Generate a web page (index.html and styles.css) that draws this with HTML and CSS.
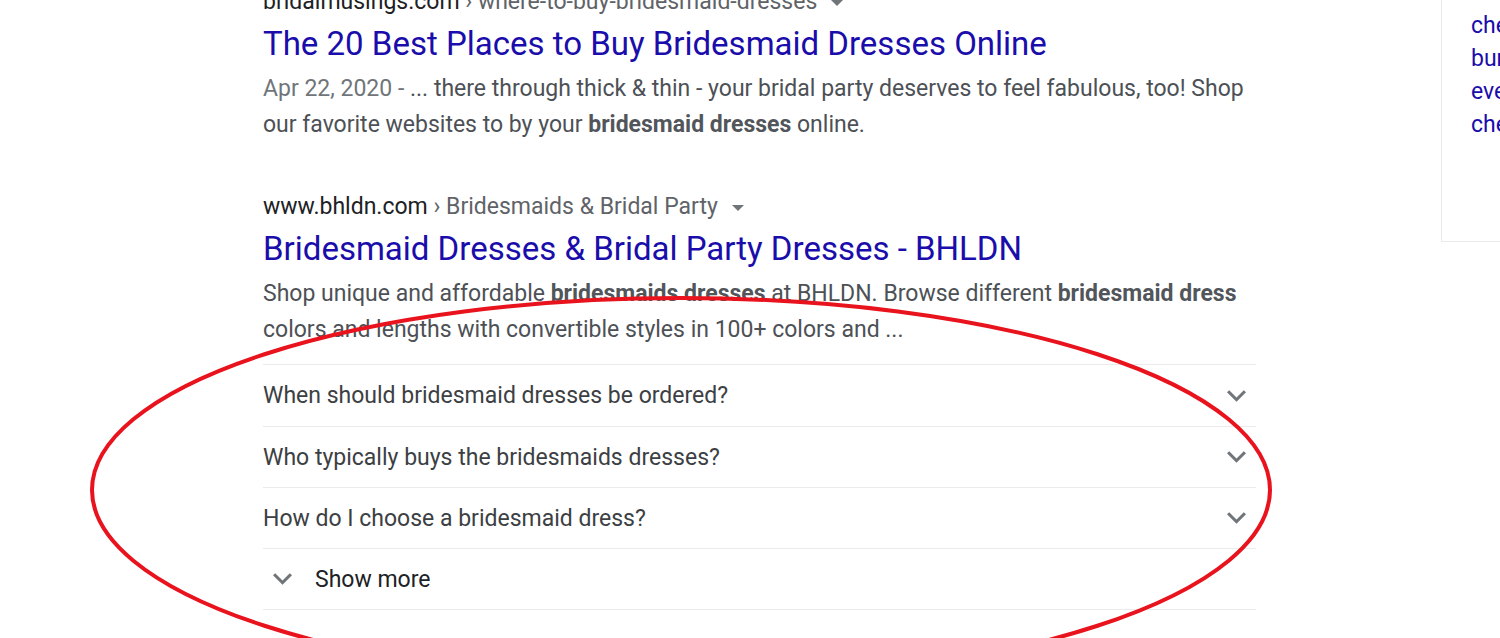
FILE: index.html
```html
<!DOCTYPE html>
<html>
<head>
<meta charset="utf-8">
<link rel="stylesheet" href="styles.css">
</head>
<body>
<div class="page">
  <main class="results">
    <div class="result first">
      <div class="cite"><span class="host">bridalmusings.com</span><span class="path"> › where-to-buy-bridesmaid-dresses</span><span class="caret"></span></div>
      <a class="title">The 20 Best Places to Buy Bridesmaid Dresses Online</a>
      <div class="snippet"><span class="date">Apr 22, 2020 - </span>... there through thick &amp; thin - your bridal party deserves to feel fabulous, too! Shop our favorite websites to by your <b>bridesmaid dresses</b> online.</div>
    </div>
    <div class="result second">
      <div class="cite"><span class="host">www.bhldn.com</span><span class="path"> › Bridesmaids &amp; Bridal Party</span><span class="caret"></span></div>
      <a class="title">Bridesmaid Dresses &amp; Bridal Party Dresses - BHLDN</a>
      <div class="snippet">Shop unique and affordable <b>bridesmaids dresses</b> at BHLDN. Browse different <b>bridesmaid dress</b> colors and lengths with convertible styles in 100+ colors and ...</div>
      <div class="faq">
        <div class="faq-row"><span>When should bridesmaid dresses be ordered?</span><svg class="chev" viewBox="6 8.59 12 7.41"><path d="M16.59 8.59L12 13.17 7.41 8.59 6 10l6 6 6-6z"/></svg></div>
        <div class="faq-row"><span>Who typically buys the bridesmaids dresses?</span><svg class="chev" viewBox="6 8.59 12 7.41"><path d="M16.59 8.59L12 13.17 7.41 8.59 6 10l6 6 6-6z"/></svg></div>
        <div class="faq-row"><span>How do I choose a bridesmaid dress?</span><svg class="chev" viewBox="6 8.59 12 7.41"><path d="M16.59 8.59L12 13.17 7.41 8.59 6 10l6 6 6-6z"/></svg></div>
        <div class="faq-row more"><svg class="chev" viewBox="6 8.59 12 7.41"><path d="M16.59 8.59L12 13.17 7.41 8.59 6 10l6 6 6-6z"/></svg><span>Show more</span></div>
      </div>
    </div>
  </main>
  <aside class="side">
    <a>cheap bridesmaid dresses</a>
    <a>burgundy bridesmaid dresses</a>
    <a>everything bridesmaid</a>
    <a>cheap bridesmaid dresses under $50</a>
  </aside>
</div>
<svg class="annotation" width="1500" height="638" viewBox="0 0 1500 638">
  <ellipse cx="681" cy="490" rx="589" ry="192" fill="none" stroke="#e8131d" stroke-width="4"/>
</svg>
</body>
</html>
```
FILE: styles.css
```css
html, body {
  margin: 0;
  padding: 0;
  background: #fff;
  overflow: hidden;
  width: 1500px;
  height: 638px;
}
body {
  font-family: Roboto, "Liberation Sans", Arial, sans-serif;
  position: relative;
}
.page {
  display: flex;
  align-items: flex-start;
  margin-top: -13px;
  width: 2000px;
}
.results {
  margin-left: 263px;
  width: 993px;
  flex-shrink: 0;
}
.result.second {
  margin-top: 49px;
}
.cite {
  height: 30px;
  line-height: 30px;
  font-size: 23px;
  white-space: nowrap;
  display: flex;
  align-items: center;
}
.cite .host { color: #202124; }
.cite .path { color: #5f6368; white-space: pre; }
.caret {
  display: inline-block;
  width: 0;
  height: 0;
  border-left: 6px solid transparent;
  border-right: 6px solid transparent;
  border-top: 6px solid #70757a;
  margin-left: 14px;
  margin-top: 2px;
}
.title {
  display: block;
  margin-top: 7px;
  font-size: 33px;
  line-height: 40px;
  color: #1a0dab;
  white-space: nowrap;
}
.snippet {
  margin-top: 7px;
  font-size: 23px;
  line-height: 36px;
  color: #4d5156;
  width: 993px;
}
.snippet b { color: #52565b; font-weight: 700; }
.snippet .date { color: #70757a; }
.faq {
  margin-top: 16px;
  border-bottom: 1px solid #ebebeb;
}
.faq-row {
  height: 61px;
  border-top: 1px solid #ebebeb;
  display: flex;
  align-items: center;
  justify-content: space-between;
  font-size: 23px;
  color: #3c4043;
  padding-right: 10px;
}
.faq-row + .faq-row { height: 60px; }
.chev {
  width: 19px;
  height: 12px;
  fill: #70757a;
  flex-shrink: 0;
}
.faq-row.more {
  justify-content: flex-start;
  color: #202124;
  padding-left: 10px;
}
.faq-row.more .chev { margin-right: 23px; }
.side {
  margin-left: 185px;
  width: 400px;
  height: 255px;
  box-sizing: border-box;
  border-left: 1px solid #ebebeb;
  border-bottom: 1px solid #ebebeb;
  padding: 22px 0 0 29px;
  display: flex;
  flex-direction: column;
  flex-shrink: 0;
}
.side a {
  font-size: 23px;
  line-height: 33px;
  color: #1a0dab;
  white-space: nowrap;
}
.annotation {
  position: absolute;
  left: 0;
  top: 0;
  pointer-events: none;
}
```
